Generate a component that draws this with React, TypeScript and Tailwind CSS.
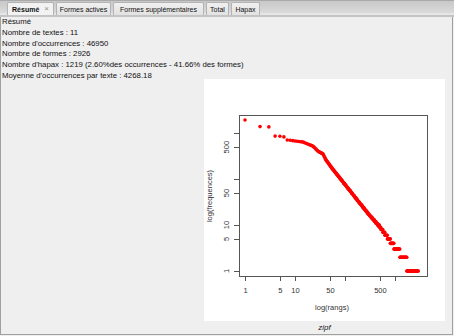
import React from "react"

const TABS = [
  { label: "Résumé", w: "w-[47px]", active: true },
  { label: "Formes actives", w: "w-[55px]" },
  { label: "Formes supplémentaires", w: "w-[91px]" },
  { label: "Total", w: "w-[23px]" },
  { label: "Hapax", w: "w-[29px]" },
]

const LINES = [
  "Résumé",
  "Nombre de textes : 11",
  "Nombre d'occurrences : 46950",
  "Nombre de formes : 2926",
  "Nombre d'hapax : 1219 (2.60%des occurrences - 41.66% des formes)",
  "Moyenne d'occurrences par texte : 4268.18",
]

// plot mapping, in page pixels
const px = (r: number) => 245 + 50 * Math.log10(r)
const py = (f: number) => 271 - 45.9 * Math.log10(f)

const HEAD = [1950, 1400, 1380, 870, 860, 835]
const ANCHORS: [number, number][] = [
  [0.86, 2.854], [1.16, 2.81], [1.36, 2.72], [1.46, 2.61], [1.56, 2.55],
  [1.62, 2.42], [1.74, 2.24], [2.04, 1.83], [2.44, 1.285], [2.7, 0.96],
  [2.98, 0.544], [3.1, 0.398], [3.24, 0.17], [3.47, 0],
]

function interp(lr: number) {
  if (lr <= ANCHORS[0][0]) return ANCHORS[0][1]
  for (let i = 1; i < ANCHORS.length; i++) {
    const [x0, y0] = ANCHORS[i - 1]
    const [x1, y1] = ANCHORS[i]
    if (lr <= x1) return y0 + ((lr - x0) / (x1 - x0)) * (y1 - y0)
  }
  return 0
}

function buildPoints() {
  const pts: { x: number; y: number }[] = []
  const seen = new Set<string>()
  let prev = Infinity
  for (let r = 1; r <= 2926; r++) {
    let f = r <= HEAD.length ? HEAD[r - 1] : Math.max(1, Math.round(10 ** interp(Math.log10(r))))
    f = Math.min(prev, f)
    prev = f
    const x = px(r)
    const y = py(f)
    const key = `${Math.round(x * 2)},${Math.round(y * 2)}`
    if (seen.has(key)) continue
    seen.add(key)
    pts.push({ x, y })
  }
  return pts
}

const POINTS = buildPoints()
const XTICKS = [1, 5, 10, 50, 100, 500, 1000]
const XLABELS = [1, 5, 10, 50, 500]
const YTICKS = [1, 5, 10, 50, 100, 500, 1000]
const YLABELS = [1, 5, 10, 50, 500]

function ZipfPlot() {
  return (
    <svg width="241" height="242" viewBox="204 79 241 242" className="block">
      <rect x="204" y="79" width="241" height="242" fill="#ffffff" />
      {POINTS.map((p, i) => (
        <circle key={i} cx={p.x} cy={p.y} r="1.8" fill="#ff0000" />
      ))}
      <rect x="239.5" y="115.5" width="188" height="161" fill="none" stroke="#555" strokeWidth="1" />
      <g stroke="#555" strokeWidth="1">
        {XTICKS.map((t) => (
          <line key={t} x1={Math.round(px(t)) + 0.5} x2={Math.round(px(t)) + 0.5} y1="276" y2="281" />
        ))}
        {YTICKS.map((t) => (
          <line key={t} x1="234" x2="239" y1={Math.round(py(t)) + 0.5} y2={Math.round(py(t)) + 0.5} />
        ))}
      </g>
      <g fill="#333" fontFamily="'Liberation Sans', Arial, sans-serif" fontSize="7.5">
        {XLABELS.map((t) => (
          <text key={t} x={px(t) + 0.5} y="293" textAnchor="middle">{t}</text>
        ))}
        {YLABELS.map((t) => (
          <text
            key={t}
            x="229"
            y={py(t)}
            textAnchor="middle"
            transform={`rotate(-90 229 ${py(t)})`}
          >
            {t}
          </text>
        ))}
        <text x="332" y="310" textAnchor="middle">log(rangs)</text>
        <text x="212" y="196" textAnchor="middle" transform="rotate(-90 212 196)">log(frequences)</text>
      </g>
    </svg>
  )
}

export default function App() {
  return (
    <div className="w-[454px] h-[336px] bg-[#efefef] text-[#111] font-['Liberation_Sans',Arial,sans-serif] overflow-hidden">
      {/* onglets */}
      <div className="h-[17px] flex items-start gap-[2px] pl-[7px] pt-[2px] border-b-2 border-[#c4c4c4] bg-[linear-gradient(to_bottom,#a9a9a9_0,#a9a9a9_1px,#c8c8c8_1px,#dadada_13px,#e6e6e6_13px)]">
        {TABS.map((t) => (
          <div
            key={t.label}
            className={`${t.w} h-[13px] flex items-center justify-center gap-[5px] border border-b-0 border-[#b3b3b3] rounded-t-[2px] text-[7px] leading-none whitespace-nowrap ${
              t.active ? "bg-[#f2f2f2] font-bold" : "bg-[linear-gradient(to_bottom,#f0f0f0,#e2e2e2)]"
            }`}
          >
            {t.label}
            {t.active && <span className="text-[#8a8a8a] font-normal text-[8px]">×</span>}
          </div>
        ))}
      </div>

      {/* contenu */}
      <div className="w-[453px] h-[318px] border-x border-b border-[#a0a0a0]">
        <div className="pl-[1px] text-[7.8px] leading-[10.8px]">
          {LINES.map((l) => (
            <div key={l} className="whitespace-nowrap">{l}</div>
          ))}
        </div>
        <div className="flex justify-end pr-[7px] -mt-[3px]">
          <div className="flex flex-col items-center">
            <ZipfPlot />
            <div className="text-[8px] italic leading-[14px] text-[#222]">zipf</div>
          </div>
        </div>
      </div>
    </div>
  )
}
